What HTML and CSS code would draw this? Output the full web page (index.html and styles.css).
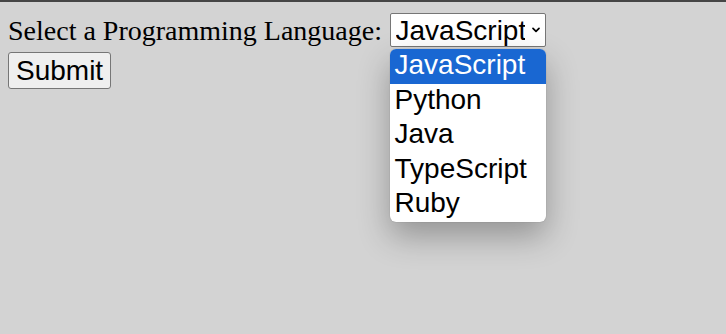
FILE: index.html
```html
<!DOCTYPE html>
<html lang="en">
<head>
<meta charset="utf-8">
<title>Select a Programming Language</title>
<link rel="stylesheet" href="styles.css">
</head>
<body>
<div class="topbar"></div>
<form class="page">
  <div class="field">
    <label class="label" for="lang">Select a Programming Language:</label>
    <span class="select-wrap">
      <select id="lang" class="select">
        <option selected>JavaScript</option>
        <option>Python</option>
        <option>Java</option>
        <option>TypeScript</option>
        <option>Ruby</option>
      </select>
      <svg class="chevron" width="8" height="6" viewBox="0 0 8 6" aria-hidden="true">
        <path d="M1 1.3 L4 4.3 L7 1.3" fill="none" stroke="#000" stroke-width="1.7" stroke-linecap="round" stroke-linejoin="round"/>
      </svg>
      <ul class="dropdown">
        <li class="option selected">JavaScript</li>
        <li class="option">Python</li>
        <li class="option">Java</li>
        <li class="option">TypeScript</li>
        <li class="option">Ruby</li>
      </ul>
    </span>
  </div>
  <div class="actions">
    <button type="button" class="submit">Submit</button>
  </div>
</form>
</body>
</html>
```
FILE: styles.css
```css
html, body {
  margin: 0;
  padding: 0;
}

body {
  background: #d3d3d3;
  font-family: "Liberation Serif", "Times New Roman", serif;
  color: #000;
  height: 334px;
  overflow: hidden;
}

.topbar {
  height: 2px;
  background: #454545;
}

.page {
  padding: 11px 8px 0;
  margin: 0;
}

.field {
  display: flex;
  align-items: baseline;
  gap: 7.5px;
}

.label {
  font-size: 28px;
  line-height: normal;
}

.select-wrap {
  position: relative;
  display: inline-block;
}

.select {
  appearance: none;
  -webkit-appearance: none;
  font-family: "Liberation Sans", Arial, sans-serif;
  font-size: 28px;
  color: #000;
  background: #fff;
  width: 156px;
  height: 34px;
  margin: 0;
  padding: 0 20px 0 5px;
  border: 1px solid #767676;
  border-radius: 2px;
  box-sizing: border-box;
}

.chevron {
  position: absolute;
  left: 142px;
  top: 14px;
  pointer-events: none;
}

.dropdown {
  position: absolute;
  top: 36px;
  left: 0;
  width: 156px;
  margin: 0;
  padding: 0;
  list-style: none;
  background: #fff;
  border-radius: 6px;
  overflow: hidden;
  box-shadow: 0 14px 32px rgba(0, 0, 0, 0.3), 0 0 1px rgba(0, 0, 0, 0.35);
  font-family: "Liberation Sans", Arial, sans-serif;
  font-size: 28px;
  z-index: 10;
}

.option {
  height: 34.5px;
  line-height: 32px;
  padding-left: 5px;
  box-sizing: border-box;
  white-space: nowrap;
  color: #000;
}

.option.selected {
  background: #1967d2;
  color: #fff;
}

.actions {
  display: flex;
  margin-top: 5px;
}

.submit {
  font-family: "Liberation Sans", Arial, sans-serif;
  font-size: 28px;
  line-height: normal;
  color: #000;
  background: #efefef;
  border: 1px solid #767676;
  border-radius: 3px;
  padding: 1.5px 7px;
  margin: 0;
}
```
